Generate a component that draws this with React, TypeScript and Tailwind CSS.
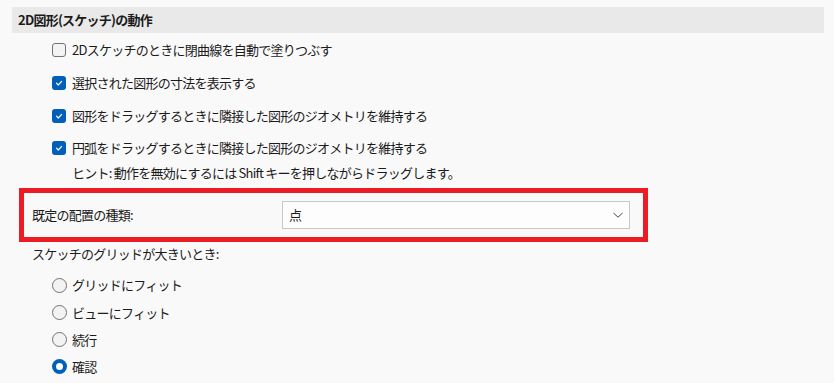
import React from 'react';

const font = { fontFamily: '"Noto Sans CJK JP", "Noto Sans", sans-serif' };

const CheckBox: React.FC<{ checked?: boolean }> = ({ checked }) =>
  checked ? (
    <span className="flex h-[14px] w-[14px] shrink-0 items-center justify-center rounded-[3px] bg-[#005fb8]">
      <svg width="10" height="10" viewBox="0 0 10 10">
        <path d="M2.5 5.2 L4.3 7 L7.6 3.4" fill="none" stroke="white" strokeWidth="1.2" strokeLinecap="round" strokeLinejoin="round" />
      </svg>
    </span>
  ) : (
    <span className="h-[14px] w-[14px] shrink-0 rounded-[3px] border border-[#737373] bg-[#f3f3f3]" />
  );

const Radio: React.FC<{ checked?: boolean }> = ({ checked }) =>
  checked ? (
    <span className="flex h-[15px] w-[15px] shrink-0 items-center justify-center rounded-full bg-[#005fb8]">
      <span className="h-[7px] w-[7px] rounded-full bg-white" />
    </span>
  ) : (
    <span className="h-[15px] w-[15px] shrink-0 rounded-full border border-[#737373] bg-[#f3f3f3]" />
  );

const CheckRow: React.FC<{ checked?: boolean; label: string; h: string }> = ({ checked, label, h }) => (
  <div className={`flex items-center gap-[6px] pl-[52px] ${h}`}>
    <CheckBox checked={checked} />
    <span>{label}</span>
  </div>
);

const RadioRow: React.FC<{ checked?: boolean; label: string; h: string }> = ({ checked, label, h }) => (
  <div className={`flex items-center gap-[5px] pl-[52px] ${h}`}>
    <Radio checked={checked} />
    <span>{label}</span>
  </div>
);

export default function App() {
  return (
    <div
      className="h-[383px] w-[834px] overflow-hidden bg-[#f9f9f9] text-[13px] tracking-[-0.75px] text-[#1b1b1b]"
      style={font}
    >
      <div className="ml-[12px] mr-[10px] mt-[7px] flex h-[26px] items-center bg-[#e9e9e9] pl-[6px] font-bold">
        2D図形(スケッチ)の動作
      </div>

      <CheckRow label="2Dスケッチのときに閉曲線を自動で塗りつぶす" h="h-[33px]" />
      <CheckRow checked label="選択された図形の寸法を表示する" h="h-[33px]" />
      <CheckRow checked label="図形をドラッグするときに隣接した図形のジオメトリを維持する" h="h-[33px]" />
      <CheckRow checked label="円弧をドラッグするときに隣接した図形のジオメトリを維持する" h="h-[32px]" />
      <div className="flex h-[18px] items-center pl-[72px]">
        ヒント: 動作を無効にするには Shift キーを押しながらドラッグします。
      </div>

      <div className="ml-[19px] mt-[6px] flex h-[54px] w-[629px] items-center border-[5px] border-[#ed1c24] pl-[8px]">
        <span className="w-[250px] shrink-0">既定の配置の種類:</span>
        <div className="flex h-[28px] w-[348px] shrink-0 items-center justify-between border border-[#c8c8c8] bg-[#fdfdfd] pl-[6px] pr-[5px]">
          <span>点</span>
          <svg width="12" height="8" viewBox="0 0 12 8">
            <path d="M1.5 2 L6 6.2 L10.5 2" fill="none" stroke="#444" strokeWidth="1" />
          </svg>
        </div>
      </div>

      <div className="flex h-[24px] items-center pl-[32px]">スケッチのグリッドが大きいとき:</div>
      <div className="mt-[5px]">
        <RadioRow label="グリッドにフィット" h="h-[28px]" />
        <RadioRow label="ビューにフィット" h="h-[27px]" />
        <RadioRow label="続行" h="h-[27px]" />
        <RadioRow checked label="確認" h="h-[27px]" />
      </div>
    </div>
  );
}
